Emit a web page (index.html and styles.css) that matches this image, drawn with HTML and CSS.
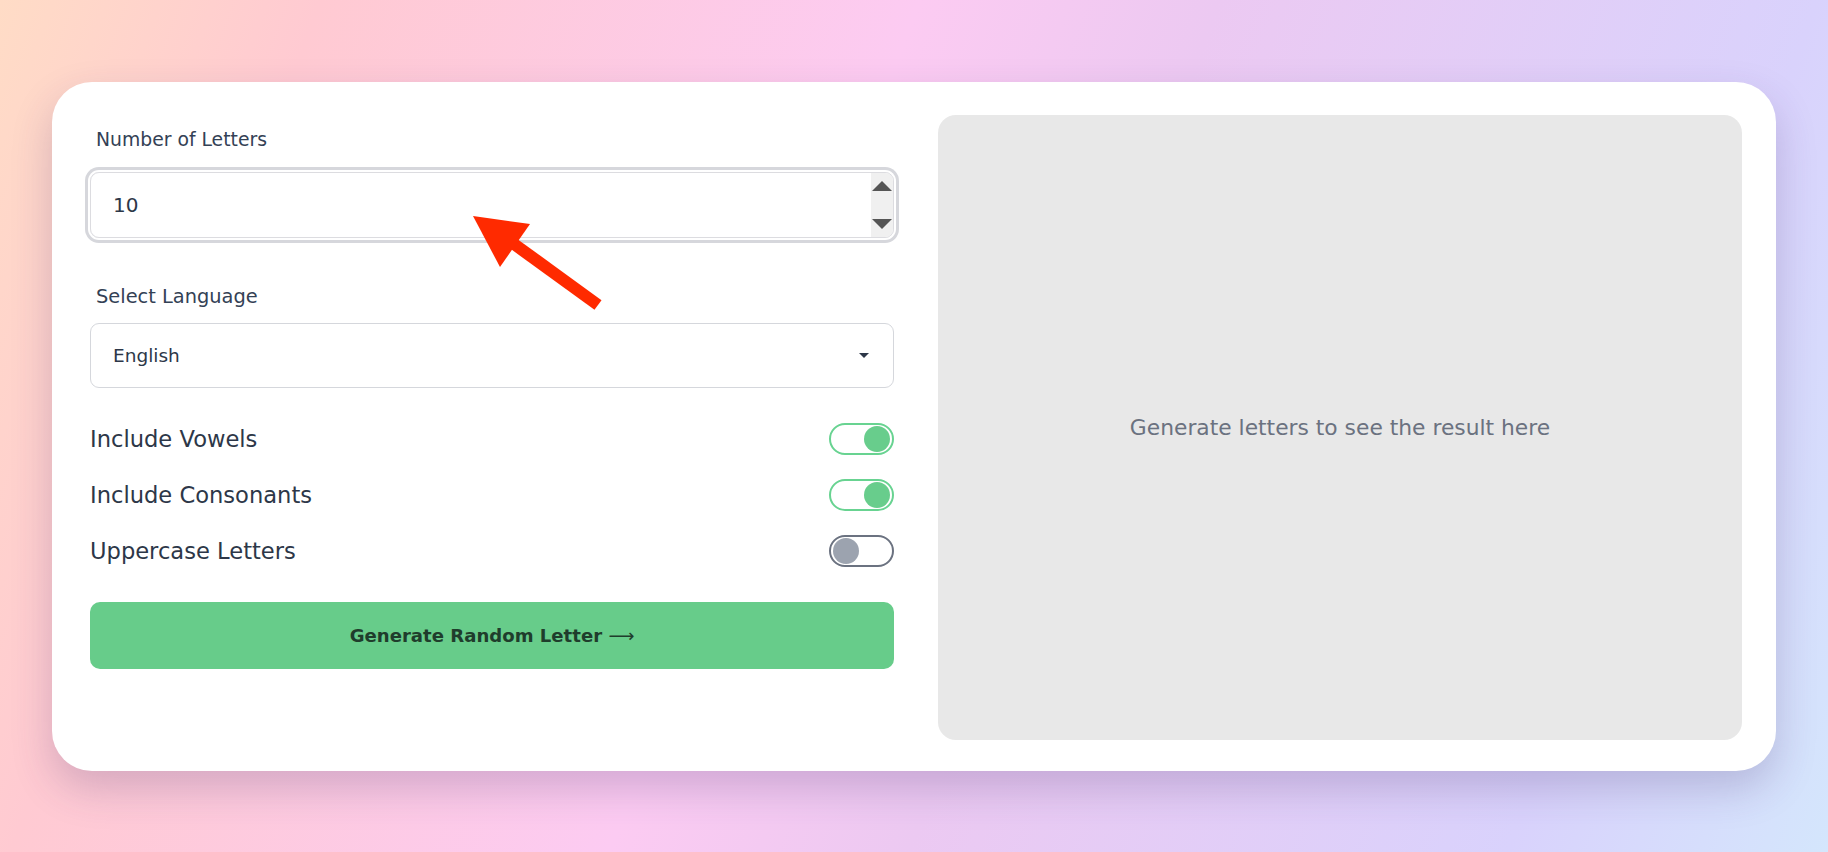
FILE: index.html
```html
<!DOCTYPE html>
<html lang="en">
<head>
<meta charset="UTF-8" />
<meta name="viewport" content="width=device-width, initial-scale=1.0" />
<title>Random Letter Generator</title>
<link rel="stylesheet" href="styles.css">
</head>
<body>

<div class="tarjeta">
  <div class="formulario">
    <label class="etiqueta etiqueta-numero">Number of Letters</label>
    <div class="numero">
      <input type="text" value="10">
      <div class="giro">
        <span class="sube"></span>
        <span class="baja"></span>
      </div>
    </div>

    <label class="etiqueta etiqueta-idioma">Select Language</label>
    <div class="selector">
      <span>English</span>
      <span class="flecha"></span>
    </div>

    <div class="opciones">
      <div class="opcion"><span>Include Vowels</span><span class="interruptor activo"><i></i></span></div>
      <div class="opcion"><span>Include Consonants</span><span class="interruptor activo"><i></i></span></div>
      <div class="opcion"><span>Uppercase Letters</span><span class="interruptor"><i></i></span></div>
    </div>

    <button class="generar">Generate Random Letter <span class="larga">&#10230;</span></button>
  </div>

  <div class="resultado">
    <p>Generate letters to see the result here</p>
  </div>
</div>

<svg class="anotacion" width="1828" height="852" viewBox="0 0 1828 852">
  <line x1="514" y1="244" x2="598" y2="305" stroke="#ff2a00" stroke-width="12" />
  <polygon points="473,216 530,224 500,267" fill="#ff2a00" />
</svg>

</body>
</html>
```

FILE: styles.css
```css
body { margin: 0; height: 100vh; display: flex; align-items: center; justify-content: center; font-family: "DejaVu Sans", Inter, sans-serif; color: #2d3748;
  background: linear-gradient(110deg, #ffdcc6 0%, #ffcad2 15%, #fccbf2 43%, #ecc9f2 57%, #d9d2fc 85%, #d4e6fc 100%); overflow: hidden; }
.tarjeta { width: calc(100% - 104px); box-sizing: border-box; background: #fff; border-radius: 40px; padding: 33px 34px 31px 38px; display: grid; grid-template-columns: 1fr 1fr; gap: 44px; box-shadow: 0 18px 40px rgba(70, 50, 110, 0.22); }
.formulario { display: flex; flex-direction: column; }
.etiqueta { display: block; font-size: 18.8px; line-height: 24px; color: #334155; padding-left: 6px; }
.etiqueta-numero { margin-top: 13px; margin-bottom: 20px; }
.etiqueta-idioma { margin-top: 47px; margin-bottom: 14px; font-size: 19.4px; }
.numero { display: flex; height: 66px; box-sizing: border-box; border: 1px solid #dcdce0; border-radius: 9px; box-shadow: 0 0 0 2px #fff, 0 0 0 5px #d6d7dc; overflow: hidden; }
.numero input { flex: 1; border: none; outline: none; font-family: inherit; font-size: 20px; color: #2d3748; padding: 0 0 0 22px; background: transparent; }
.giro { width: 22px; background: #f0f0f0; display: flex; flex-direction: column; justify-content: space-between; align-items: center; padding: 8px 0; }
.sube { width: 0; height: 0; border-left: 10px solid transparent; border-right: 10px solid transparent; border-bottom: 10px solid #555; }
.baja { width: 0; height: 0; border-left: 10px solid transparent; border-right: 10px solid transparent; border-top: 10px solid #555; }
.selector { height: 65px; box-sizing: border-box; border: 1px solid #d5d7dc; border-radius: 9px; display: flex; align-items: center; justify-content: space-between; padding: 0 24px 0 22px; font-size: 18.5px; color: #2d3748; }
.flecha { width: 0; height: 0; border-left: 5px solid transparent; border-right: 5px solid transparent; border-top: 5px solid #2d3748; }
.opciones { display: flex; flex-direction: column; gap: 24px; margin-top: 35px; }
.opcion { display: flex; align-items: center; justify-content: space-between; font-size: 22.6px; height: 32px; }
.interruptor { width: 65px; height: 32px; box-sizing: border-box; border: 2px solid #6b7280; border-radius: 16px; display: flex; align-items: center; padding: 0 2px; justify-content: flex-start; }
.interruptor i { width: 26px; height: 26px; border-radius: 50%; background: #9ca3af; }
.interruptor.activo { border-color: #68d391; justify-content: flex-end; }
.interruptor.activo i { background: #68cd8c; }
.generar { margin-top: 35px; height: 67px; border: none; border-radius: 10px; background: #67cc8a; color: #1f3d2c; font-family: inherit; font-size: 18.1px; font-weight: bold; cursor: pointer; }
.larga { font-weight: normal; }
.resultado { min-height: 625px; background: #e8e8e8; border-radius: 18px; display: flex; align-items: center; justify-content: center; }
.resultado p { margin: 0; font-size: 21.8px; color: #6b7280; }
.anotacion { position: absolute; left: 0; top: 0; pointer-events: none; }
```
